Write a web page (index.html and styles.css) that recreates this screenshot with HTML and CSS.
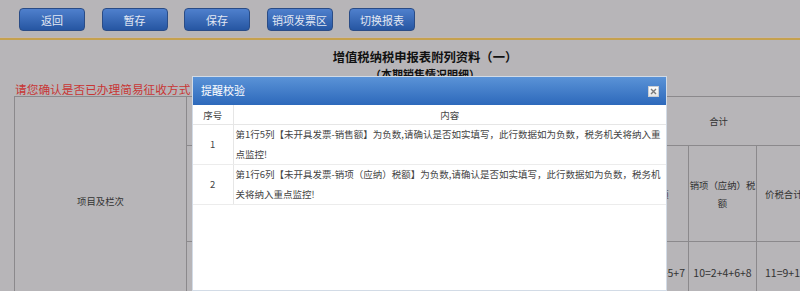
FILE: index.html
```html
<!DOCTYPE html>
<html lang="zh-CN">
<head>
  <meta charset="UTF-8" />
  <meta name="viewport" content="width=device-width, initial-scale=1.0" />
  <title>增值税纳税申报表附列资料（一）</title>
  <link rel="stylesheet" href="styles.css">
</head>
<body>
  <div class="toolbar">
    <button class="btn">返回</button>
    <button class="btn">暂存</button>
    <button class="btn">保存</button>
    <button class="btn">销项发票区</button>
    <button class="btn">切换报表</button>
  </div>

  <div class="report">
    <h2 class="title">增值税纳税申报表附列资料（一）</h2>
    <div class="subtitle">（本期销售情况明细）</div>
    <div class="notice">请您确认是否已办理简易征收方式</div>

    <!-- columns under the dialog are left blank, only the right end shows -->
    <table class="grid">
      <colgroup>
        <col style="width:172px">
        <col span="8" style="width:54.25px">
        <col span="3" style="width:68px">
      </colgroup>
      <tr class="r1">
        <td rowspan="3">项目及栏次</td>
        <td colspan="2"></td>
        <td colspan="2"></td>
        <td colspan="2"></td>
        <td colspan="2"></td>
        <td colspan="3" class="total">合计</td>
      </tr>
      <tr class="r2">
        <td></td>
        <td></td>
        <td></td>
        <td></td>
        <td></td>
        <td></td>
        <td></td>
        <td></td>
        <td>销售额</td>
        <td>销项（应纳）税额</td>
        <td class="sum">价税合计</td>
      </tr>
      <tr class="r3">
        <td></td>
        <td></td>
        <td></td>
        <td></td>
        <td></td>
        <td></td>
        <td></td>
        <td></td>
        <td class="formula">9=1+3+5+7</td>
        <td>10=2+4+6+8</td>
        <td class="sum">11=9+10</td>
      </tr>
    </table>
  </div>

  <div class="dialog">
    <div class="dialog-head">
      <span>提醒校验</span>
      <button class="dialog-close">
        <svg width="7" height="7" viewBox="0 0 7 7"><path d="M1 1L6 6M6 1L1 6" stroke="#7a7a7a" stroke-width="1.4"/></svg>
      </button>
    </div>
    <table class="check-table">
      <colgroup>
        <col style="width:40px">
        <col>
      </colgroup>
      <thead>
        <tr>
          <th>序号</th>
          <th>内容</th>
        </tr>
      </thead>
      <tbody>
        <tr>
          <td class="seq">1</td>
          <td>第1行5列【未开具发票-销售额】为负数,请确认是否如实填写，此行数据如为负数，税务机关将纳入重点监控!</td>
        </tr>
        <tr>
          <td class="seq">2</td>
          <td>第1行6列【未开具发票-销项（应纳）税额】为负数,请确认是否如实填写，此行数据如为负数，税务机关将纳入重点监控!</td>
        </tr>
      </tbody>
    </table>
  </div>
</body>
</html>
```

FILE: styles.css
```css
body {
  margin: 0;
  height: 291px;
  overflow: hidden;
  position: relative;
  background-color: #b7b5b8;
  font-family: "Noto Sans CJK SC", "Noto Sans", sans-serif;
}
.toolbar {
  display: flex;
  gap: 16.5px;
  height: 30px;
  padding: 8px 19px 0;
  border-bottom: 2px solid #c5a14e;
  box-shadow: 0 -1px 0 #c4b6ae inset;
}
.btn {
  width: 66px;
  height: 23px;
  box-sizing: border-box;
  border: 1px solid #2a4c86;
  border-radius: 4px;
  background: linear-gradient(#4f80cd, #2656a2);
  color: #e2e8f3;
  font-family: inherit;
  font-size: 11px;
  padding: 0;
}
.report {
  width: 822px;
  margin-left: 14px;
}
.title {
  margin: 8px 0 0;
  text-align: center;
  font-size: 12.3px;
  line-height: 18px;
  color: #111;
}
.subtitle {
  text-align: center;
  font-size: 11px;
  font-weight: bold;
  line-height: 16px;
  color: #111;
}
.notice {
  padding-left: 1px;
  font-size: 11.7px;
  line-height: 14px;
  color: #c83634;
  white-space: nowrap;
}
.grid {
  width: 810px;
  table-layout: fixed;
  border-collapse: collapse;
}
.grid td {
  border: 1px solid #8b898c;
  padding: 0;
  text-align: center;
  font-size: 9.4px;
  line-height: 18px;
  color: #333;
}
.grid .r1 td {
  height: 48px;
}
.grid .total {
  padding-right: 8px;
}
.grid .r2 td {
  height: 95px;
}
.grid .r3 td {
  height: 62px;
  font-size: 10.5px;
}
.grid .r3 .formula {
  text-align: right;
  padding-right: 3px;
}
.grid .sum {
  text-align: left;
  padding-left: 8px;
  white-space: nowrap;
}
.dialog {
  position: absolute;
  left: 192px;
  top: 76px;
  width: 473px;
  height: 213px;
  border: 1px solid #d2dbe6;
  background-color: #fff;
}
.dialog-head {
  position: relative;
  height: 28px;
  padding-left: 8px;
  background: linear-gradient(#5a93d7, #2d69bb);
  color: #fff;
  font-size: 11px;
  line-height: 27px;
}
.dialog-close {
  position: absolute;
  right: 7px;
  top: 9px;
  width: 11px;
  height: 11px;
  padding: 0;
  border: 1px solid #c9cdd3;
  background: linear-gradient(#fdfdfd, #e6e6e6);
  display: flex;
  align-items: center;
  justify-content: center;
}
.check-table {
  width: 100%;
  table-layout: fixed;
  border-collapse: collapse;
  font-size: 9.5px;
  color: #444;
}
.check-table th {
  height: 19px;
  padding: 0;
  font-weight: normal;
  border-bottom: 1px solid #e6e6e6;
}
.check-table th:first-child,
.check-table td:first-child {
  border-right: 1px solid #e6e6e6;
}
.check-table td {
  padding: 0 2px;
  line-height: 19.5px;
  text-align: left;
  border-bottom: 1px solid #ececec;
}
.check-table td.seq {
  text-align: center;
}
```
